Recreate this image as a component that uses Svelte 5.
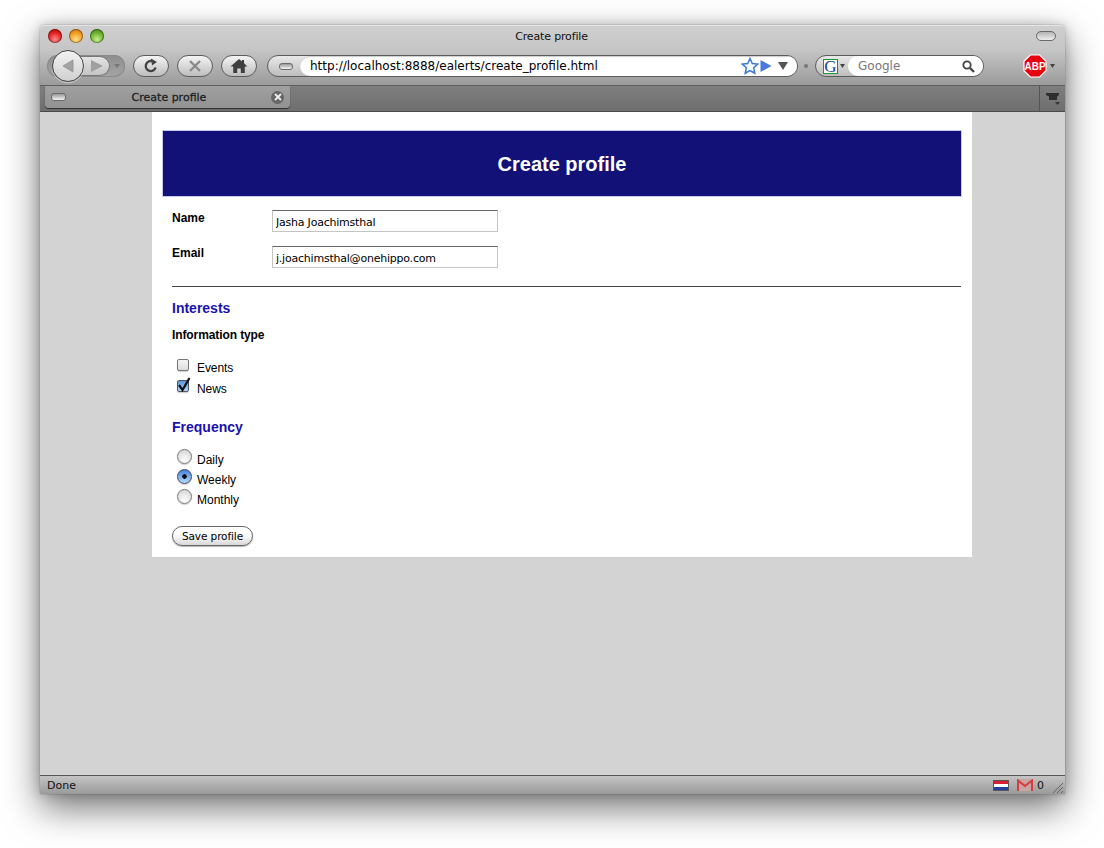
<script>
  const interests = [
    { label: 'Events', checked: false },
    { label: 'News', checked: true }
  ];
  const frequencies = [
    { label: 'Daily', checked: false },
    { label: 'Weekly', checked: true },
    { label: 'Monthly', checked: false }
  ];
</script>

<div class="desktop">
<div class="window">
  <div class="chrome">
    <div class="titlebar">
      <div class="lights">
        <span class="light red"></span>
        <span class="light amber"></span>
        <span class="light green"></span>
      </div>
      <div class="title">Create profile</div>
      <span class="pill"></span>
    </div>

    <div class="toolbar">
      <div class="history">
        <span class="back">
          <svg width="16" height="18" viewBox="0 0 16 18"><path d="M13 3v12L3 9z" fill="#a3a3a3" stroke="#9a9a9a"/></svg>
        </span>
        <span class="forward">
          <svg width="14" height="14" viewBox="0 0 14 14"><path d="M1 1v12l12-6z" fill="#a0a0a0"/></svg>
        </span>
        <span class="history-drop"></span>
      </div>
      <span class="btn">
        <svg width="16" height="16" viewBox="0 0 16 16"><path d="M12.6 9.500A5 5 0 1 1 9 3.200" fill="none" stroke="#444" stroke-width="2.400"/><path d="M8 0.500l6 3.400-5 3.600z" fill="#444"/></svg>
      </span>
      <span class="btn">
        <svg width="16" height="16" viewBox="0 0 16 16"><path d="M3 3l10 10M13 3L3 13" stroke="#8a8a8a" stroke-width="2.400"/></svg>
      </span>
      <span class="btn">
        <svg width="18" height="16" viewBox="0 0 18 16"><path d="M9 1L0.500 8.500h2.700V15h4v-4.500h3.600V15h4V8.500h2.700L14 5.200V2h-2v1.400z" fill="#3f3f3f"/></svg>
      </span>
      <div class="urlbar">
        <span class="site">
          <span class="pill small"></span>
        </span>
        <div class="url">
          <span class="url-text">http://localhost:8888/ealerts/create_profile.html</span>
          <svg class="star" width="18" height="18" viewBox="0 0 18 18"><path d="M9 1.500l2.300 5 5.400.6-4 3.700 1.100 5.400L9 13.500l-4.800 2.700 1.100-5.400-4-3.700 5.400-.6z" fill="#f4f8ff" stroke="#3a78d8" stroke-width="1.500"/></svg>
          <svg width="12" height="14" viewBox="0 0 12 14"><path d="M0.500 1v12L11.500 7z" fill="#4a78e0"/></svg>
          <svg class="drop" width="10" height="8" viewBox="0 0 10 8"><path d="M0 0h10L5 8z" fill="#555"/></svg>
        </div>
      </div>
      <span class="sep-dot"></span>
      <div class="searchbar">
        <span class="engine">
          <span class="g-icon">G</span>
          <svg width="5" height="4" viewBox="0 0 5 4"><path d="M0 0h5L2.500 4z" fill="#444"/></svg>
        </span>
        <div class="search">
          <span>Google</span>
          <svg width="13" height="13" viewBox="0 0 13 13"><circle cx="5" cy="5" r="3.700" fill="none" stroke="#444" stroke-width="1.800"/><path d="M8 8l4 4" stroke="#444" stroke-width="2.400"/></svg>
        </div>
      </div>
      <div class="abp">
        <svg width="24" height="24" viewBox="0 0 24 24"><path d="M7.300 1h9.400L23 7.300v9.400L16.700 23H7.300L1 16.700V7.300z" fill="#e8000f" stroke="#fff" stroke-width="1.200"/><text x="12" y="16" text-anchor="middle" class="abp-text">ABP</text></svg>
        <svg width="5" height="4" viewBox="0 0 5 4"><path d="M0 0h5L2.500 4z" fill="#444"/></svg>
      </div>
    </div>

    <div class="tabbar">
      <div class="tab">
        <span class="pill small tab-icon"></span>
        <span class="tab-title">Create profile</span>
        <span class="tab-close">
          <svg width="8" height="8" viewBox="0 0 8 8"><path d="M1 1l6 6M7 1L1 7" stroke="#eee" stroke-width="1.800"/></svg>
        </span>
      </div>
      <div class="tab-rest"></div>
      <div class="tab-list">
        <svg width="16" height="14" viewBox="0 0 16 14"><path d="M1 1h13v2l-2 1.500V8H4V4.500L1 3z" fill="#2e2e2e"/><path d="M10 10h5l-2.500 3z" fill="#333"/></svg>
      </div>
    </div>
  </div>

  <div class="viewport">
    <main class="page">
      <header class="banner"><h1>Create profile</h1></header>

      <form class="form">
        <div class="field">
          <label for="name">Name</label>
          <input id="name" type="text" value="Jasha Joachimsthal" />
        </div>
        <div class="field">
          <label for="email">Email</label>
          <input id="email" type="text" value="j.joachimsthal@onehippo.com" />
        </div>
        <hr />

        <h2>Interests</h2>
        <h3>Information type</h3>
        <div class="checks">
          {#each interests as item}
            <div class="check-row">
              <span class="checkbox" class:on={item.checked}>
                {#if item.checked}
                  <svg width="14" height="16" viewBox="0 0 14 16"><path d="M1 9l3.500 5L11.500 2" fill="none" stroke="#111" stroke-width="2.200"/></svg>
                {/if}
              </span>
              <span>{item.label}</span>
            </div>
          {/each}
        </div>

        <h2 class="freq">Frequency</h2>
        <div class="radios">
          {#each frequencies as item}
            <div class="radio-row">
              <span class="radio" class:on={item.checked}></span>
              <span>{item.label}</span>
            </div>
          {/each}
        </div>

        <button type="button" class="save">Save profile</button>
      </form>
    </main>
  </div>

  <div class="statusbar">
    <span class="status-text">Done</span>
    <span class="flag"></span>
    <svg class="gmail" width="16" height="12" viewBox="0 0 16 12"><rect x="0" y="0" width="16" height="12" fill="#c9a4a4"/><path d="M1 12V1.500L8 7l7-5.500V12" fill="none" stroke="#d83c3c" stroke-width="2"/></svg>
    <span class="count">0</span>
    <svg class="grip" width="12" height="12" viewBox="0 0 12 12"><path d="M11 1L1 11M11 5l-6 6M11 9l-2 2" stroke="#666" stroke-width="1"/></svg>
  </div>
</div>
</div>

<style>
  :global(body) {
    margin: 0;
    background: #fff;
    font-family: "Liberation Sans", Arial, sans-serif;
  }
  .desktop {
    height: 848px;
    box-sizing: border-box;
    padding: 25px 0 0 40px;
    overflow: hidden;
  }
  .window {
    width: 1025px;
    height: 769px;
    display: flex;
    flex-direction: column;
    border-radius: 4px 4px 0 0;
    box-shadow: 0 14px 36px rgba(0,0,0,.55), 0 0 12px rgba(0,0,0,.2), 0 0 1px rgba(0,0,0,.7);
    font-family: "DejaVu Sans", sans-serif;
  }
  .chrome { flex: none; }
  .titlebar {
    height: 24px;
    box-sizing: border-box;
    padding-bottom: 2px;
    display: flex;
    align-items: center;
    position: relative;
    background: linear-gradient(#cfcfcf, #c6c6c6);
    border-radius: 4px 4px 0 0;
    box-shadow: inset 0 1px 0 #e4e4e4;
  }
  .lights { display: flex; gap: 7px; margin-left: 8px; }
  .light { width: 14px; height: 14px; border-radius: 50%; box-shadow: inset 0 0 0 1px rgba(0,0,0,.35); }
  .red { background: radial-gradient(circle at 50% 75%, #ff8a8a, #e02020 55%, #a00); }
  .amber { background: radial-gradient(circle at 50% 75%, #ffe08a, #f09a20 55%, #b86a00); }
  .green { background: radial-gradient(circle at 50% 75%, #c8f08a, #6ab030 55%, #3c7a10); }
  .title {
    position: absolute;
    left: 0;
    right: 2px;
    text-align: center;
    font-size: 11px;
    letter-spacing: -.15px;
    color: #111;
  }
  .pill {
    display: block;
    margin-left: auto;
    margin-right: 9px;
    width: 18px;
    height: 8px;
    border: 1px solid #6a6a6a;
    border-radius: 5px;
    background: linear-gradient(#b4b4b4, #eee);
  }
  .pill.small { margin: 0; width: 12px; height: 5px; background: linear-gradient(#999, #f4f4f4); border-radius: 3px; }
  .toolbar {
    height: 37px;
    box-sizing: border-box;
    padding: 0 0 2px 7px;
    display: flex;
    align-items: center;
    background: linear-gradient(#c6c6c6, #9b9b9b);
    border-bottom: 1px solid #5f5f5f;
  }
  .history {
    width: 78px;
    height: 22px;
    margin-right: 8px;
    display: flex;
    align-items: center;
    position: relative;
    border-radius: 11px;
    background: linear-gradient(#8e8e8e, #a4a4a4);
    box-shadow: inset 0 0 0 1px #8a8a8a;
  }
  .back {
    position: absolute;
    left: 5px;
    top: -5px;
    width: 30px;
    height: 30px;
    border: 1px solid #444;
    border-radius: 50%;
    display: flex;
    align-items: center;
    justify-content: center;
    background: linear-gradient(#f2f2f2, #d0d0d0);
    box-shadow: 0 1px 1px rgba(255,255,255,.5);
  }
  .forward {
    margin-left: 18px;
    width: 45px;
    height: 20px;
    padding-left: 25px;
    box-sizing: border-box;
    border-radius: 0 11px 11px 0;
    border: 1px solid #777;
    border-left: 0;
    display: flex;
    align-items: center;
    background: linear-gradient(#e4e4e4, #c4c4c4);
  }
  .history-drop {
    margin-left: 4px;
    width: 0;
    height: 0;
    border-left: 3.500px solid transparent;
    border-right: 3.500px solid transparent;
    border-top: 4px solid #777;
  }
  .btn {
    width: 34px;
    height: 20px;
    margin-right: 8px;
    flex: none;
    display: flex;
    align-items: center;
    justify-content: center;
    border: 1px solid #5c5c5c;
    border-radius: 11px;
    background: linear-gradient(#f4f4f4, #bdbdbd);
  }
  .urlbar {
    width: 531px;
    height: 22px;
    margin-left: 2px;
    box-sizing: border-box;
    display: flex;
    border: 1px solid #5c5c5c;
    border-radius: 11px;
    background: linear-gradient(#e8e8e8, #bdbdbd);
    overflow: hidden;
  }
  .site { width: 32px; flex: none; display: flex; align-items: center; padding-left: 11px; box-sizing: border-box; }
  .url {
    flex: 1;
    display: flex;
    align-items: center;
    gap: 3px;
    padding: 0 9px 0 10px;
    background: #fff;
    border-radius: 11px 0 0 11px;
    box-shadow: inset 0 1px 1px rgba(0,0,0,.2);
  }
  .url-text { flex: 1; font-size: 12px; color: #000; white-space: nowrap; }
  .star { margin-right: -2px; }
  .drop { margin-left: 3px; }
  .sep-dot { width: 4px; height: 4px; margin: 0 7px 0 6px; border-radius: 50%; background: #777; flex: none; }
  .searchbar {
    width: 169px;
    height: 22px;
    box-sizing: border-box;
    display: flex;
    border: 1px solid #5c5c5c;
    border-radius: 11px;
    background: linear-gradient(#e8e8e8, #bdbdbd);
    overflow: hidden;
  }
  .engine { width: 32px; flex: none; display: flex; align-items: center; padding-left: 7px; gap: 2px; box-sizing: border-box; }
  .g-icon {
    width: 15px;
    height: 15px;
    flex: none;
    box-sizing: border-box;
    border: 1px solid;
    border-color: #1a9a2a #d03020 #1a9a2a #1a9a2a;
    background: #fff;
    color: #1a3aa8;
    font: 17px/13px "Liberation Serif", serif;
    text-align: center;
  }
  .search {
    flex: 1;
    display: flex;
    align-items: center;
    justify-content: space-between;
    padding: 0 8px 0 10px;
    background: #fff;
    border-radius: 11px 0 0 11px;
    font-size: 12px;
    color: #777;
  }
  .abp { margin-left: 39px; display: flex; align-items: center; gap: 3px; }
  .abp-text { font: bold 10px "Liberation Sans", sans-serif; fill: #fff; }
  .tabbar {
    height: 26px;
    box-sizing: border-box;
    display: flex;
    background: linear-gradient(#7e7e7e, #6f6f6f);
    border-bottom: 1px solid #4a4a4a;
  }
  .tab {
    width: 245px;
    height: 22px;
    margin-left: 5px;
    display: flex;
    align-items: center;
    padding: 0 6px 0 6px;
    box-sizing: border-box;
    background: linear-gradient(#a0a0a0, #929292);
    border-radius: 0 0 4px 4px;
    box-shadow: 0 1px 1px rgba(0,0,0,.6);
  }
  .pill.tab-icon { width: 13px; height: 6px; }
  .tab-title {
    flex: 1;
    text-align: center;
    padding-left: 1px;
    font-size: 11px;
    -webkit-text-stroke: .3px #222;
    color: #222;
  }
  .tab-close {
    width: 13px;
    height: 13px;
    border-radius: 50%;
    background: #666;
    display: flex;
    align-items: center;
    justify-content: center;
  }
  .tab-rest { flex: 1; }
  .tab-list {
    width: 25px;
    display: flex;
    align-items: center;
    justify-content: center;
    border-left: 1px solid #555;
  }
  .viewport { flex: 1; min-height: 0; background: #d3d3d3; font-family: "Liberation Sans", Arial, sans-serif; }
  .page {
    width: 820px;
    height: 445px;
    margin-left: 112px;
    background: #fff;
    padding: 18px 10px 0;
    box-sizing: border-box;
  }
  .banner {
    height: 67px;
    box-sizing: border-box;
    padding-top: 2px;
    border: 1px solid #c8c8e8;
    background: #111178;
    display: flex;
    align-items: center;
    justify-content: center;
  }
  h1 { margin: 0; font-size: 20px; color: #fff; }
  .form { padding: 13px 1px 0 10px; }
  .field { display: flex; align-items: flex-start; height: 36px; }
  .field label { width: 100px; padding-top: 1px; font-size: 12px; font-weight: bold; color: #000; }
  .field + .field label { padding-top: 0; }
  .field input {
    width: 226px;
    height: 22px;
    box-sizing: border-box;
    padding: 2px 3px 0;
    border: 1px solid #c4c4c4;
    border-top-color: #666;
    border-radius: 0;
    font: 11px "DejaVu Sans", sans-serif;
    letter-spacing: -.22px;
    color: #000;
    background: #fff;
    outline: none;
  }
  hr { border: 0; border-top: 1px solid #444; height: 0; margin: 4px 0 0; }
  h2 { margin: 13px 0 0; font-size: 14px; line-height: 16px; color: #1a12b0; }
  h3 { margin: 12px 0 0; font-size: 12px; line-height: 14px; letter-spacing: -.1px; color: #000; }
  .checks { margin: 18px 0 0 5px; font-size: 12px; letter-spacing: -.1px; }
  .check-row { display: flex; align-items: flex-start; height: 21px; line-height: 16px; gap: 8px; color: #000; }
  .checkbox {
    width: 12px;
    height: 12px;
    flex: none;
    box-sizing: border-box;
    margin-top: -1px;
    position: relative;
    border: 1px solid #777;
    border-radius: 2px;
    background: linear-gradient(#f4f4f4, #dcdcdc);
    box-shadow: 0 1px 1px rgba(0,0,0,.2);
  }
  .checkbox.on { background: linear-gradient(#5b92dc, #b4d6f8); border-color: #556; }
  .checkbox svg { position: absolute; left: 0; top: -5px; }
  .freq { margin-top: 17px; }
  .radios { margin: 17px 0 0 5px; font-size: 12px; }
  .radio-row { display: flex; align-items: flex-start; height: 20px; line-height: 16px; gap: 5px; color: #000; }
  .radio {
    width: 13px;
    height: 13px;
    flex: none;
    margin-top: -3px;
    border: 1px solid #777;
    border-radius: 50%;
    background: radial-gradient(circle at 50% 80%, #fff, #d0d0d0);
    box-shadow: 0 1px 1px rgba(0,0,0,.2);
  }
  .radio.on {
    background: radial-gradient(circle, #111 0, #111 2px, transparent 2.500px), linear-gradient(#3f7fe0, #b5dcfb);
    border-color: #445;
  }
  .save {
    display: block;
    margin-top: 14px;
    width: 81px;
    height: 20px;
    padding: 0;
    border: 1px solid #666;
    border-radius: 10px;
    background: linear-gradient(#fff 40%, #d8d8d8);
    box-shadow: 0 1px 1px rgba(0,0,0,.3);
    font: 10.5px "DejaVu Sans", sans-serif;
    letter-spacing: -.1px;
    color: #000;
  }
  .statusbar {
    height: 19px;
    flex: none;
    box-sizing: border-box;
    display: flex;
    align-items: center;
    padding-left: 7px;
    border-top: 1px solid #555;
    background: linear-gradient(#c4c4c4, #9a9a9a);
    font-size: 11px;
    color: #111;
  }
  .status-text { flex: 1; }
  .flag {
    width: 16px;
    height: 11px;
    box-sizing: border-box;
    border: 1px solid #555;
    background: linear-gradient(#d82030 33%, #fff 33%, #fff 66%, #2040a0 66%);
  }
  .gmail { margin-left: 8px; }
  .count { margin-left: 4px; }
  .grip { margin-left: 8px; margin-right: 1px; margin-top: 6px; }
</style>
